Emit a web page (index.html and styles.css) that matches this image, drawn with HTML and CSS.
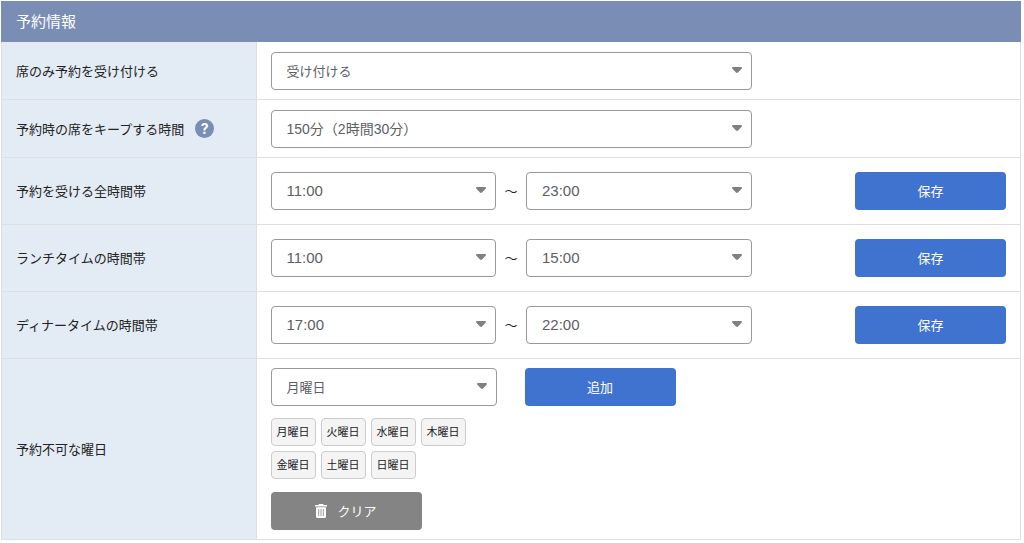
FILE: index.html
```html
<!DOCTYPE html>
<html lang="ja">
<head>
<meta charset="utf-8">
<meta name="viewport" content="width=device-width, initial-scale=1">
<title>予約情報</title>
<link rel="stylesheet" href="styles.css">
</head>
<body>
<svg class="defs" aria-hidden="true">
  <symbol id="caret" viewBox="0 0 10 6"><path d="M1 0h8q1 0 1 .8q0 .5-.4.9L6 5.500Q5 6.400 4 5.500L.4 1.700Q0 1.300 0 .8Q0 0 1 0z" fill="currentColor"/></symbol>
</svg>
<main class="panel">
  <h1 class="panel-title">予約情報</h1>

  <div class="row">
    <div class="row-label"><label for="seat-only">席のみ予約を受け付ける</label></div>
    <div class="row-body">
      <div class="fields">
        <div class="select"><select id="seat-only"><option>受け付ける</option><option>受け付けない</option></select><svg class="caret"><use href="#caret"/></svg></div>
      </div>
    </div>
  </div>

  <div class="row">
    <div class="row-label">
      <label for="keep-time">予約時の席をキープする時間</label>
      <button type="button" class="help" aria-label="ヘルプ">?</button>
    </div>
    <div class="row-body">
      <div class="fields">
        <div class="select duration"><select id="keep-time"><option>150分（2時間30分）</option></select><svg class="caret"><use href="#caret"/></svg></div>
      </div>
    </div>
  </div>

  <div class="row row-tall">
    <div class="row-label"><label for="all-from">予約を受ける全時間帯</label></div>
    <div class="row-body">
      <div class="fields">
        <div class="select time"><select id="all-from"><option>11:00</option></select><svg class="caret"><use href="#caret"/></svg></div>
        <span class="tilde">〜</span>
        <div class="select time"><select aria-label="予約を受ける全時間帯の終了"><option>23:00</option></select><svg class="caret"><use href="#caret"/></svg></div>
      </div>
      <button type="button" class="button">保存</button>
    </div>
  </div>

  <div class="row row-tall">
    <div class="row-label"><label for="lunch-from">ランチタイムの時間帯</label></div>
    <div class="row-body">
      <div class="fields">
        <div class="select time"><select id="lunch-from"><option>11:00</option></select><svg class="caret"><use href="#caret"/></svg></div>
        <span class="tilde">〜</span>
        <div class="select time"><select aria-label="ランチタイムの終了"><option>15:00</option></select><svg class="caret"><use href="#caret"/></svg></div>
      </div>
      <button type="button" class="button">保存</button>
    </div>
  </div>

  <div class="row row-tall">
    <div class="row-label"><label for="dinner-from">ディナータイムの時間帯</label></div>
    <div class="row-body">
      <div class="fields">
        <div class="select time"><select id="dinner-from"><option>17:00</option></select><svg class="caret"><use href="#caret"/></svg></div>
        <span class="tilde">〜</span>
        <div class="select time"><select aria-label="ディナータイムの終了"><option>22:00</option></select><svg class="caret"><use href="#caret"/></svg></div>
      </div>
      <button type="button" class="button">保存</button>
    </div>
  </div>

  <div class="row">
    <div class="row-label"><label for="closed-day">予約不可な曜日</label></div>
    <div class="row-body row-stack">
      <div class="add-line">
        <div class="select day"><select id="closed-day"><option>月曜日</option><option>火曜日</option><option>水曜日</option><option>木曜日</option><option>金曜日</option><option>土曜日</option><option>日曜日</option></select><svg class="caret"><use href="#caret"/></svg></div>
        <button type="button" class="button">追加</button>
      </div>
      <ul class="tags">
        <li>月曜日</li><li>火曜日</li><li>水曜日</li><li>木曜日</li><li>金曜日</li><li>土曜日</li><li>日曜日</li>
      </ul>
      <button type="button" class="button button-gray">
        <svg class="trash" viewBox="0 0 12 14" aria-hidden="true"><path d="M4 0h4l.7 1H11.500q.5 0 .5.500V2.500H0V1.500Q0 1 .5 1H3.300z" fill="#fff"/><path d="M1 3.300h10v9.200q0 1.500-1.500 1.500h-7Q1 14 1 12.500z" fill="#fff"/><path d="M3.700 5v7M6 5v7M8.300 5v7" stroke="#848484" stroke-width=".8"/></svg>
        クリア
      </button>
    </div>
  </div>
</main>
</body>
</html>
```
FILE: styles.css
```css
* {
  box-sizing: border-box;
}

body {
  margin: 0;
  background: #fff;
  color: #222;
  font-family: Inter, "Noto Sans CJK JP", sans-serif;
  font-size: 13px;
  line-height: 20px;
}

button,
select {
  font: inherit;
}

.defs {
  position: absolute;
  width: 0;
  height: 0;
}

.panel {
  margin: 1px 3px 3px 1px;
}

.panel-title {
  margin: 0;
  padding: 10px 15px 9px;
  background: #7a8db4;
  color: #fff;
  font-size: 15px;
  font-weight: 400;
  line-height: 22px;
}

.row {
  display: grid;
  grid-template-columns: 1fr 3fr;
  border: 1px solid #dddfe1;
  border-top: 0;
}

.row-label {
  display: flex;
  align-items: center;
  gap: 11px;
  padding: 0 14px;
  background: #e3ebf4;
  border-right: 1px solid #dddfe1;
}

.row-body {
  display: flex;
  align-items: center;
  justify-content: space-between;
  gap: 16px;
  padding: 10px 14px 9px;
}

.row-tall .row-body {
  padding: 14px;
}

.row-body.row-stack {
  flex-direction: column;
  align-items: flex-start;
  gap: 0;
  padding-top: 9px;
}

.fields {
  display: flex;
  align-items: center;
  flex: 0 1 481px;
}

.select {
  display: grid;
  flex: 1;
  align-items: center;
}

.select select {
  grid-area: 1 / 1;
  width: 100%;
  height: 38px;
  padding: 0 30px 1px 15px;
  appearance: none;
  background: #fff;
  border: 1px solid #999;
  border-radius: 4px;
  color: #5c6066;
}

.time select,
.duration select {
  font-family: "Liberation Sans", "Noto Sans CJK JP", sans-serif;
  font-size: 15px;
}

.duration select {
  font-size: 14px;
}

.caret {
  grid-area: 1 / 1;
  justify-self: end;
  width: 10px;
  height: 6px;
  margin: 0 10px 2px 0;
  color: #808080;
  pointer-events: none;
}

.tilde {
  width: 30px;
  text-align: center;
}

.help {
  display: flex;
  align-items: center;
  justify-content: center;
  width: 19px;
  height: 19px;
  padding: 0;
  border: 0;
  border-radius: 50%;
  background: #7a8db4;
  color: #fff;
  font-size: 14px;
  font-weight: 700;
  line-height: 19px;
}

.button {
  display: flex;
  align-items: center;
  justify-content: center;
  gap: 10px;
  flex: none;
  width: 151px;
  height: 38px;
  padding: 0 0 1px;
  border: 0;
  border-radius: 4px;
  background: #4073cf;
  color: #fff;
}

.button-gray {
  background: #848484;
}

.add-line {
  display: flex;
  gap: 28px;
}

.select.day {
  flex: 0 1 226px;
  width: 226px;
}

.tags {
  display: flex;
  flex-wrap: wrap;
  gap: 5px;
  width: 200px;
  margin: 12px 0 13px;
  padding: 0;
  list-style: none;
  font-size: 11px;
}

.tags li {
  padding: 3px 5px;
  background: #f4f4f4;
  border: 1px solid #ccc;
  border-radius: 4px;
}

.trash {
  width: 12px;
  height: 14px;
}
```
